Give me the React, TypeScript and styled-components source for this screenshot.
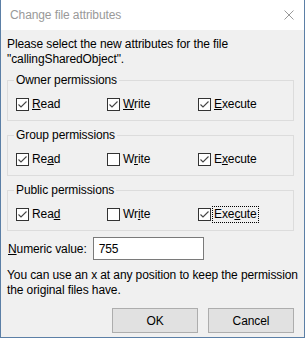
import React from "react";
import styled, { createGlobalStyle } from "styled-components";

type Perm = { label: string; key: number; checked: boolean; focused?: boolean };

const groups: { title: string; perms: Perm[] }[] = [
  {
    title: "Owner permissions",
    perms: [
      { label: "Read", key: 0, checked: true },
      { label: "Write", key: 0, checked: true },
      { label: "Execute", key: 0, checked: true },
    ],
  },
  {
    title: "Group permissions",
    perms: [
      { label: "Read", key: 2, checked: true },
      { label: "Write", key: 1, checked: false },
      { label: "Execute", key: 1, checked: true },
    ],
  },
  {
    title: "Public permissions",
    perms: [
      { label: "Read", key: 3, checked: true },
      { label: "Write", key: 2, checked: false },
      { label: "Execute", key: 3, checked: true, focused: true },
    ],
  },
];

// underline the access key letter
const withKey = (text: string, idx: number) => (
  <>
    {text.slice(0, idx)}
    <u>{text[idx]}</u>
    {text.slice(idx + 1)}
  </>
);

const App: React.FC = () => {
  return (
    <>
      <GlobalStyle />
      <Window>
        <TitleBar>
          <Title>Change file attributes</Title>
          <svg width="10" height="10" viewBox="0 0 10 10">
            <path d="M0.5 0.5 L9.5 9.5 M9.5 0.5 L0.5 9.5" stroke="#999" strokeWidth="1" />
          </svg>
        </TitleBar>
        <Body>
          <Intro>
            Please select the new attributes for the file
            <br />
            "callingSharedObject".
          </Intro>
          {groups.map((g) => (
            <Group key={g.title}>
              <Legend>{g.title}</Legend>
              <Row>
                {g.perms.map((p) => (
                  <Option key={p.label}>
                    <Box>
                      {p.checked && (
                        <svg width="11" height="11" viewBox="0 0 11 11">
                          <path d="M1.5 5.5 L4 8 L9.5 2.5" fill="none" stroke="#444" strokeWidth="1.1" />
                        </svg>
                      )}
                    </Box>
                    <OptionText $focused={p.focused}>{withKey(p.label, p.key)}</OptionText>
                  </Option>
                ))}
              </Row>
            </Group>
          ))}
          <ValueRow>
            <span>{withKey("Numeric value:", 0)}</span>
            <ValueInput>755</ValueInput>
          </ValueRow>
          <Help>
            You can use an x at any position to keep the permission
            <br />
            the original files have.
          </Help>
          <Buttons>
            <Button>OK</Button>
            <Button>Cancel</Button>
          </Buttons>
        </Body>
      </Window>
    </>
  );
};

export default App;

const GlobalStyle = createGlobalStyle`
  body {
    margin: 0;
    font-family: "Liberation Sans", Arial, sans-serif;
    font-size: 12px;
    letter-spacing: -0.1px;
    color: #000;
  }
`;

const Window = styled.div`
  width: 305px;
  height: 338px;
  box-sizing: border-box;
  border: 1px solid #5b7fa6;
  border-top: none;
  background: #f0f0f0;
  display: flex;
  flex-direction: column;
  overflow: hidden;
`;

const TitleBar = styled.div`
  flex-shrink: 0;
  height: 30px;
  box-sizing: border-box;
  background: #fff;
  display: flex;
  align-items: center;
  justify-content: space-between;
  padding: 0 10px 0 9px;
`;

const Title = styled.div`
  color: #999;
  font-size: 12px;
`;

const Body = styled.div`
  padding: 7px 10px 0 6px;
  display: flex;
  flex-direction: column;
  white-space: nowrap;
`;

const Intro = styled.div`
  line-height: 15px;
  margin-bottom: 13px;
`;

const Group = styled.div`
  position: relative;
  flex-shrink: 0;
  height: 41px;
  box-sizing: border-box;
  border: 1px solid #dcdcdc;
  margin-bottom: 14px;
  padding: 16px 0 0 8px;
`;

const Legend = styled.div`
  position: absolute;
  top: -8px;
  left: 6px;
  padding: 0 2px;
  line-height: 15px;
  background: #f0f0f0;
`;

const Row = styled.div`
  display: flex;
`;

const Option = styled.div`
  width: 91px;
  display: flex;
  align-items: center;
  height: 15px;
`;

const Box = styled.div`
  width: 13px;
  height: 13px;
  box-sizing: border-box;
  border: 1px solid #333;
  background: #fff;
  display: flex;
  align-items: center;
  justify-content: center;
  margin-right: 2px;
`;

const OptionText = styled.span<{ $focused?: boolean }>`
  line-height: 15px;
  padding: 0 1px;
  outline: ${(p) => (p.$focused ? "1px dotted #000" : "none")};
`;

const ValueRow = styled.div`
  display: flex;
  align-items: center;
  gap: 6px;
  margin-top: -8px;
  height: 23px;
  padding-left: 1px;
`;

const ValueInput = styled.div`
  width: 111px;
  height: 23px;
  box-sizing: border-box;
  border: 1px solid #7a7a7a;
  background: #fff;
  padding-left: 5px;
  display: flex;
  align-items: center;
`;

const Help = styled.div`
  line-height: 15px;
  margin-top: 8px;
`;

const Buttons = styled.div`
  display: flex;
  justify-content: flex-end;
  gap: 10px;
  margin-top: 10px;
`;

const Button = styled.div`
  width: 86px;
  height: 25px;
  box-sizing: border-box;
  background: #e1e1e1;
  border: 1px solid #adadad;
  display: flex;
  align-items: center;
  justify-content: center;
`;
